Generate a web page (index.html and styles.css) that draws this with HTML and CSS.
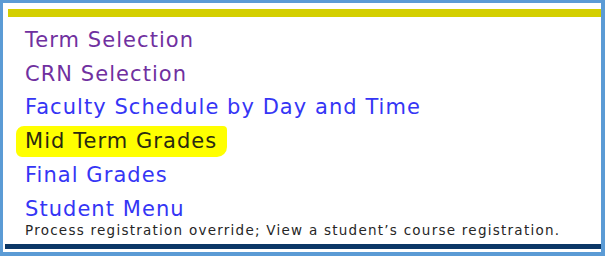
FILE: index.html
```html
<!DOCTYPE html>
<html>
<head>
<meta charset="utf-8">
<link rel="stylesheet" href="styles.css">
</head>
<body>
<div class="frame">
  <div class="topbar"></div>
  <ul class="menu">
    <li><a class="visited" href="#">Term Selection</a></li>
    <li><a class="visited" href="#">CRN Selection</a></li>
    <li><a class="link" href="#">Faculty Schedule by Day and Time</a></li>
    <li><a class="link marked" href="#">Mid Term Grades</a></li>
    <li><a class="link" href="#">Final Grades</a></li>
    <li><a class="link" href="#">Student Menu</a></li>
  </ul>
  <p class="desc">Process registration override; View a student’s course registration.</p>
  <div class="bottombar"></div>
</div>
</body>
</html>
```
FILE: styles.css
```css
html, body {
  margin: 0;
  padding: 0;
  background: #ffffff;
}
.frame {
  box-sizing: border-box;
  width: 605px;
  height: 256px;
  border: 3px solid #5b9bd5;
  border-right-width: 4px;
  border-bottom-width: 4px;
  display: flex;
  flex-direction: column;
  font-family: "DejaVu Sans", Verdana, sans-serif;
}
.frame > * {
  flex-shrink: 0;
}
.topbar {
  height: 8px;
  background: #d4cf00;
  margin: 6px 0 0 5px;
}
.menu {
  list-style: none;
  margin: 7px 0 0 22px;
  padding: 0;
  font-size: 21px;
  line-height: 33.7px;
  letter-spacing: 1.05px;
}
.menu a {
  text-decoration: none;
}
.visited {
  color: #7030a0;
}
.link {
  color: #3535f5;
}
.marked {
  color: #2a2a10;
  background: #ffff00;
  padding: 3px 10px 4px 9px;
  margin-left: -9px;
  border-radius: 8px 4px 10px 6px;
}
.desc {
  margin: -4px 0 0 22px;
  font-size: 13.5px;
  line-height: 16px;
  letter-spacing: 1.25px;
  color: #262626;
}
.bottombar {
  height: 5px;
  background: #0b3766;
  margin: 6px 0 0 2px;
}
```
